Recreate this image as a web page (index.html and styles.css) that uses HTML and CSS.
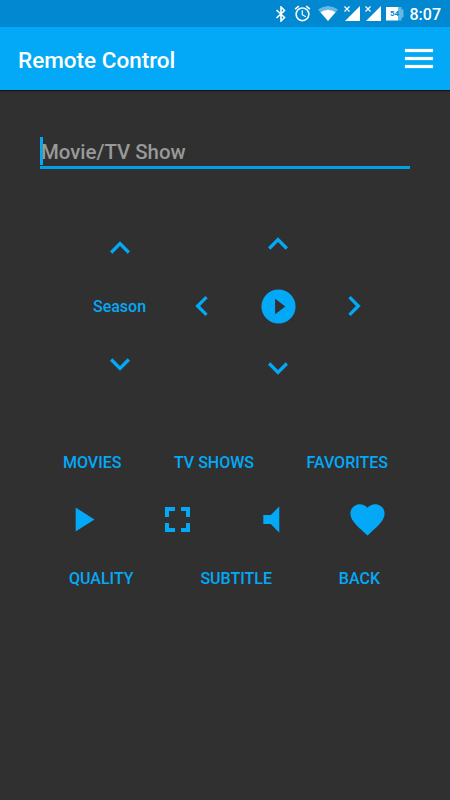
FILE: index.html
```html
<!DOCTYPE html>
<html>
    <head>
        <meta charset="utf-8">
        <title>Remote Control</title>
        <link rel="stylesheet" href="styles.css">
    </head>
    <body>
        <div id="statusBar">
            <svg width="12" height="16" viewBox="0 0 12 16"><path d="M1.500 4l8 7.500L6 15V1l3.500 3.500-8 7.500" fill="none" stroke="#fff" stroke-width="1.600"/></svg>
            <svg class="alarm" width="19" height="19" viewBox="0 0 24 24"><path fill="#fff" d="M22 5.720l-4.600-3.860-1.290 1.530 4.600 3.860L22 5.720zM7.880 3.390L6.600 1.860 2 5.710l1.290 1.530 4.590-3.850zM12.500 8H11v6l4.750 2.850.75-1.230-4-2.370V8zM12 4c-4.970 0-9 4.030-9 9s4.020 9 9 9a9 9 0 0 0 0-18zm0 16c-3.870 0-7-3.130-7-7s3.130-7 7-7 7 3.130 7 7-3.130 7-7 7z"/></svg>
            <svg class="wifi" width="20" height="15" viewBox="0 0 20 15"><path fill="#67b8e3" d="M0 3.500Q10-3.500 20 3.500L10 15z"/><path fill="#fff" d="M2.500 6.200Q10 1.200 17.500 6.200L10 15z"/></svg>
            <svg class="signal" width="16" height="15" viewBox="0 0 16 15"><path fill="#fff" d="M16 0v15H1z"/><path d="M.500.500l5 5M5.500.500l-5 5" stroke="#fff" stroke-width="1.200"/></svg>
            <svg class="signal" width="16" height="15" viewBox="0 0 16 15"><path fill="#fff" d="M16 0v15H1z"/><path d="M.500.500l5 5M5.500.500l-5 5" stroke="#fff" stroke-width="1.200"/></svg>
            <div class="battery">54</div>
            <span class="clock">8:07</span>
        </div>

        <div id="appBar">
            <h1>Remote Control</h1>
            <button class="hamburger"><span></span><span></span><span></span></button>
        </div>

        <div id="main">
            <div class="search">
                <span class="cursor"></span>
                <span>Movie/TV Show</span>
            </div>

            <div id="controls">
                <div class="season">
                    <svg class="icon" viewBox="0 0 24 24"><path d="M12 8l-6 6 1.410 1.410L12 10.830l4.590 4.580L18 14z"/></svg>
                    <span>Season</span>
                    <svg class="icon" viewBox="0 0 24 24"><path d="M16.590 8.590L12 13.170 7.410 8.590 6 10l6 6 6-6z"/></svg>
                </div>
                <div class="dpad">
                    <svg class="icon up" viewBox="0 0 24 24"><path d="M12 8l-6 6 1.410 1.410L12 10.830l4.590 4.580L18 14z"/></svg>
                    <svg class="icon left" viewBox="0 0 24 24"><path d="M15.410 7.410L14 6l-6 6 6 6 1.410-1.410L10.830 12z"/></svg>
                    <svg class="icon big ok" viewBox="0 0 24 24"><path d="M12 2a10 10 0 1 0 0 20 10 10 0 0 0 0-20zm-2 14.500v-9l6 4.500-6 4.500z"/></svg>
                    <svg class="icon right" viewBox="0 0 24 24"><path d="M10 6L8.590 7.410 13.170 12l-4.580 4.590L10 18l6-6z"/></svg>
                    <svg class="icon down" viewBox="0 0 24 24"><path d="M16.590 8.590L12 13.170 7.410 8.590 6 10l6 6 6-6z"/></svg>
                </div>
            </div>

            <div class="row top">
                <span>MOVIES</span>
                <span>TV SHOWS</span>
                <span>FAVORITES</span>
            </div>
            <div class="row icons">
                <svg class="icon big" viewBox="0 0 24 24"><path d="M8 5v14l11-7z"/></svg>
                <svg class="icon big" viewBox="0 0 41 41"><path d="M8 8h10v4h-6v6H8zM24 8h9v10h-4v-6h-5zM8 24h4v5h6v4H8zM29 24h4v9h-9v-4h5z"/></svg>
                <svg class="icon big" viewBox="0 0 41 41"><path d="M11.300 16h7.500l8.500-8.500v26.300l-8.500-8.800h-7.500z"/></svg>
                <svg class="icon big" viewBox="0 0 24 24"><path d="M12 21.350l-1.450-1.320C5.400 15.360 2 12.280 2 8.500 2 5.420 4.420 3 7.500 3c1.740 0 3.410.81 4.500 2.090C13.090 3.810 14.760 3 16.500 3 19.580 3 22 5.420 22 8.500c0 3.780-3.400 6.860-8.550 11.540L12 21.350z"/></svg>
            </div>
            <div class="row bottom">
                <span>QUALITY</span>
                <span>SUBTITLE</span>
                <span>BACK</span>
            </div>
        </div>
    </body>
</html>
```
FILE: styles.css
```css
body {
    margin: 0;
    height: 800px;
    overflow: hidden;
    background-color: #303030;
    color: #03a9f7;
    font-family: Roboto, sans-serif;
}
#statusBar {
    display: flex;
    align-items: center;
    justify-content: flex-end;
    box-sizing: border-box;
    height: 27px;
    padding-right: 9px;
    background-color: #0288d1;
    color: white;
}
.alarm {
    margin-left: 6px;
    margin-bottom: 1px;
}
.wifi {
    margin-left: 6px;
}
.signal {
    margin-left: 5px;
}
.wifi + .signal {
    margin-left: 6px;
}
.battery {
    box-sizing: border-box;
    width: 18px;
    height: 14px;
    margin-left: 5px;
    background: linear-gradient(to right, white 12px, #67b8e3 12px);
    clip-path: polygon(0 0, 16px 0, 16px 3px, 100% 3px, 100% 11px, 16px 11px, 16px 100%, 0 100%);
    color: #0288d1;
    font-size: 8px;
    font-weight: 700;
    line-height: 14px;
    text-align: center;
}
.clock {
    margin-left: 6px;
    margin-top: 1px;
    font-size: 16px;
    font-weight: 500;
}
#appBar {
    display: flex;
    align-items: center;
    justify-content: space-between;
    height: 63px;
    padding: 0 17px 0 18px;
    background-color: #03a9f7;
    box-shadow: 0 1px 1px #111;
}
h1 {
    margin: 3px 0 0;
    color: white;
    font-size: 22.5px;
    font-weight: 500;
}
.hamburger {
    display: flex;
    flex-direction: column;
    gap: 5px;
    padding: 0;
    border: none;
    background: none;
}
.hamburger span {
    width: 28px;
    height: 3px;
    background-color: white;
    box-shadow: 0 0 1px white;
}
.search {
    display: flex;
    align-items: center;
    height: 28px;
    margin: 48px 40px 0;
    border-bottom: 3px solid #03a0ea;
    color: #999;
    font-size: 20.4px;
    font-weight: 500;
}
.search span:last-child {
    margin-bottom: 1px;
}
.cursor {
    width: 3px;
    height: 28px;
    margin-right: -2px;
    margin-bottom: 2px;
    background-color: #03a9f7;
}
#controls {
    display: flex;
    align-items: center;
    height: 186px;
    margin-top: 44px;
    padding-left: 79px;
}
.season {
    display: grid;
    grid-template-rows: repeat(3, 58px);
    place-items: center;
    width: 81px;
    margin-right: 4px;
    font-size: 16px;
    font-weight: 500;
}
.dpad {
    display: grid;
    grid-template-columns: repeat(3, 76px);
    grid-template-rows: repeat(3, 62px);
    grid-template-areas: ". up ." "left ok right" ". down .";
    place-items: center;
}
.icon {
    display: block;
    width: 40px;
    height: 40px;
    fill: #03a9f7;
}
.big {
    width: 41px;
    height: 41px;
}
.up {
    grid-area: up;
}
.left {
    grid-area: left;
}
.ok {
    grid-area: ok;
}
.right {
    grid-area: right;
}
.down {
    grid-area: down;
}
.row {
    display: flex;
    align-items: center;
    justify-content: space-between;
    font-size: 16px;
    font-weight: 500;
}
.top {
    height: 30px;
    margin-top: 48px;
    padding: 0 62px 0 63px;
}
.icons {
    height: 41px;
    margin-top: 22px;
    padding: 0 62px;
}
.bottom {
    height: 30px;
    margin-top: 23px;
    padding: 0 70px 0 69px;
}
```
